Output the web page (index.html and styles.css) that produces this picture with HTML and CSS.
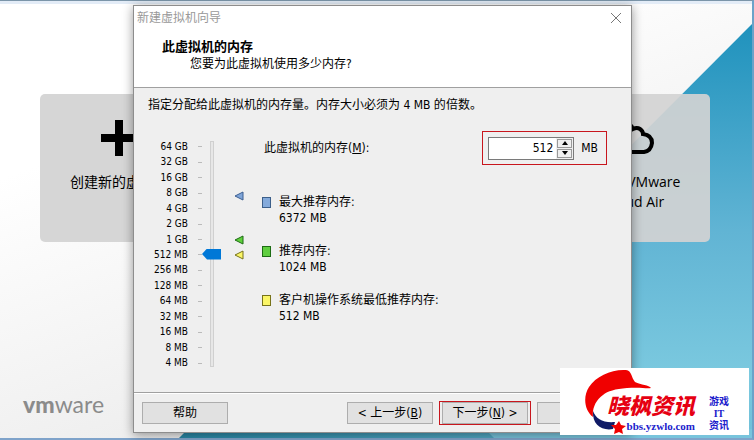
FILE: index.html
```
<!DOCTYPE html>
<html lang="zh-CN">
<head>
  <meta charset="UTF-8">
  <meta name="viewport" content="width=device-width, initial-scale=1.0">
  <title>新建虚拟机向导</title>
  <link rel="stylesheet" href="styles.css">
</head>
<body>
  <main class="home">
    <svg class="home-bg" viewBox="0 0 752 433" preserveAspectRatio="none" aria-hidden="true">
      <defs>
        <linearGradient id="sky" x1="0" y1="0" x2="0" y2="1">
          <stop offset="0" stop-color="#1f92bd"/>
          <stop offset="0.5" stop-color="#61b4d4"/>
          <stop offset="0.85" stop-color="#7bc9df"/>
          <stop offset="1" stop-color="#6fbfd8"/>
        </linearGradient>
        <linearGradient id="deep" x1="0" y1="0" x2="1" y2="0">
          <stop offset="0" stop-color="#2888a6"/>
          <stop offset="1" stop-color="#5fb2cc"/>
        </linearGradient>
      </defs>
      <path d="M752 20V433H339Z" fill="url(#sky)"/>
      <path d="M179 433L390 222L600 433Z" fill="url(#deep)"/>
      <path d="M485 424L494 433H752V424Z" fill="#78c4dc"/>
    </svg>
    <div class="home-panel">
      <button class="home-btn" type="button">
        <svg width="36" height="36" viewBox="0 0 36 36" aria-hidden="true"><path d="M14 0h8v14h14v8H22v14h-8V22H0v-8h14z"/></svg>
        <span>创建新的虚拟机</span>
      </button>
      <button class="home-btn" type="button">
        <svg width="36" height="36" viewBox="0 0 36 36" aria-hidden="true"><path d="M4 4h28v28H4z" fill="none" stroke="#000" stroke-width="4"/></svg>
        <span>打开虚拟机</span>
      </button>
      <button class="home-btn" type="button">
        <svg width="48" height="36" viewBox="0 0 48 36" aria-hidden="true"><path d="M10 32Q2 31 2 24Q2 17 9 16Q10 4 20 4Q24 4 26 9Q30 7 33 9Q36 11 36 14Q45 15 45 23Q44 31 37 32Z" fill="none" stroke="#000" stroke-width="4"/></svg>
        <span>连接到 VMware<br>vCloud Air</span>
      </button>
    </div>
    <div class="vmware"><b>vm</b>ware</div>
  </main>

  <form class="dialog">
    <div class="title-bar">
      <span>新建虚拟机向导</span>
      <button class="close" type="button" aria-label="关闭">
        <svg width="12" height="12" viewBox="0 0 12 12"><path d="M1 1l10 10M11 1L1 11" stroke="#777"/></svg>
      </button>
    </div>
    <header class="dialog-head">
      <h1>此虚拟机的内存</h1>
      <p>您要为此虚拟机使用多少内存?</p>
    </header>

    <section class="dialog-body">
      <p>指定分配给此虚拟机的内存量。内存大小必须为 4 MB 的倍数。</p>
      <div class="memory">
        <ul class="scale">
          <li>64 GB</li>
          <li>32 GB</li>
          <li>16 GB</li>
          <li>8 GB</li>
          <li>4 GB</li>
          <li>2 GB</li>
          <li>1 GB</li>
          <li>512 MB</li>
          <li>256 MB</li>
          <li>128 MB</li>
          <li>64 MB</li>
          <li>32 MB</li>
          <li>16 MB</li>
          <li>8 MB</li>
          <li>4 MB</li>
        </ul>
        <input class="slider" type="range" min="0" max="14" value="7" aria-label="内存">
        <div class="marks">
          <svg class="mark-max" width="10" height="10" viewBox="0 0 10 10"><path d="M1 5l8-4v8z" fill="#7fa5d8" stroke="#3c5f92"/></svg>
          <svg class="mark-rec" width="10" height="10" viewBox="0 0 10 10"><path d="M1 5l8-4v8z" fill="#5fd03c" stroke="#1d6b14"/></svg>
          <svg class="mark-min" width="10" height="10" viewBox="0 0 10 10"><path d="M1 5l8-4v8z" fill="#fbf667" stroke="#77731b"/></svg>
        </div>
        <div class="details">
          <div class="field">
            <label for="mem">此虚拟机的内存(<u>M</u>):</label>
            <div class="field-box">
              <div class="spinner">
                <input id="mem" type="text" value="512">
                <div class="spin-btns">
                  <button type="button" aria-label="增加"><svg width="6" height="4" viewBox="0 0 6 4"><path d="M0 4l3-4 3 4z"/></svg></button>
                  <button type="button" aria-label="减少"><svg width="6" height="4" viewBox="0 0 6 4"><path d="M0 0l3 4 3-4z"/></svg></button>
                </div>
              </div>
              <span>MB</span>
            </div>
          </div>
          <dl class="legend">
            <div class="max"><dt>最大推荐内存:</dt><dd>6372 MB</dd></div>
            <div class="rec"><dt>推荐内存:</dt><dd>1024 MB</dd></div>
            <div class="min"><dt>客户机操作系统最低推荐内存:</dt><dd>512 MB</dd></div>
          </dl>
        </div>
      </div>
    </section>

    <footer class="dialog-foot">
      <button class="btn help" type="button">帮助</button>
      <button class="btn" type="button">&lt; 上一步(<u>B</u>)</button>
      <span class="highlight"><button class="btn" type="button">下一步(<u>N</u>) &gt;</button></span>
      <button class="btn" type="button"></button>
    </footer>
  </form>

  <aside class="site-mark">
    <svg class="site-logo" width="76" height="66" viewBox="0 0 76 66" aria-hidden="true">
      <path d="M9 49C0 42-1 28 5 19C12 8 28 1 42 2C48 3 47 9 51 14C57 17 65 17 67 20C62 21 58 19 43 20C31 21 24 23 19 27C12 32 8 40 9 49Z" fill="#f00000"/>
      <path d="M9 43C12 51 19 55 31 54L29 61C18 63 8 57 9 43Z" fill="#101b66"/>
      <path d="M35 53l2 4 5 1-4 3 1 5-4-2-5 2 1-5-4-4 5 0z" fill="#f00000"/>
    </svg>
    <div class="site-name">
      <strong>晓枫资讯</strong>
      <span>bbs.yzwlo.com</span>
    </div>
    <div class="site-tags">游戏<br>IT<br>资讯</div>
  </aside>
</body>
</html>
```

FILE: styles.css
```
* {
  box-sizing: border-box;
}
body {
  margin: 0;
  min-height: 100vh;
  position: relative;
  display: flex;
  overflow: hidden;
  font: 12px/16px "DejaVu Sans Condensed", "Noto Sans CJK SC", sans-serif;
  color: #000;
  background: #dfe9f4;
}
h1, p, ul, dl, dd {
  margin: 0;
  padding: 0;
}
button, input {
  font: inherit;
  color: inherit;
}

/* home screen behind the wizard */
.home {
  flex: 1;
  position: relative;
  display: flex;
  flex-direction: column;
  justify-content: space-between;
  border-top: 1px solid #7b95a9;
  border-right: 2px solid #6aa3c9;
  border-bottom: 2px solid #7fa3ca;
  padding: 93px 42px 20px 40px;
  background: linear-gradient(#e3ecf7 3px, transparent 3px), linear-gradient(160deg, #fff 25%, #ececec 75%);
}
.home-bg {
  position: absolute;
  left: 0;
  top: 3px;
  width: 100%;
  height: calc(100% - 3px);
}
.home-panel {
  position: relative;
  display: flex;
  justify-content: space-between;
  height: 148px;
  border-radius: 5px;
  background: rgba(210, 210, 210, 0.92);
}
.home-btn {
  display: flex;
  flex-direction: column;
  align-items: center;
  gap: 16px;
  width: 158px;
  padding: 26px 0 0;
  border: none;
  background: none;
  font: 14px/20px "Open Sans", "Noto Sans CJK SC", sans-serif;
}
.vmware {
  position: relative;
  margin-left: -17px;
  font: 23px/28px Lato, sans-serif;
  color: #8b8b8b;
}
.vmware b {
  font-weight: 900;
}

/* wizard window */
.dialog {
  position: absolute;
  top: 5px;
  left: 133px;
  right: 122px;
  border: 1px solid #8d8d8d;
  background: #efefef;
  box-shadow: 0 2px 10px rgba(0, 0, 0, 0.4);
}
.title-bar {
  display: flex;
  justify-content: space-between;
  align-items: center;
  height: 24px;
  padding: 0 9px 0 3px;
  background: #fff;
  color: #999;
}
.close {
  display: flex;
  padding: 0;
  border: none;
  background: none;
}
.dialog-head {
  height: 58px;
  padding: 8px 28px;
  background: #fff;
  border-bottom: 1px solid #a0a0a0;
}
.dialog-head h1 {
  font-size: 13px;
  line-height: 18px;
}
.dialog-head p {
  padding-left: 28px;
}
.dialog-body {
  padding: 9px 14px 21px;
}
.memory {
  display: flex;
  margin-top: 26px;
}
.scale {
  display: grid;
  grid-template-rows: repeat(15, 1fr);
  align-items: center;
  width: 54px;
  height: 232px;
  list-style: none;
  font-size: 10px;
  line-height: 14px;
}
.scale li {
  display: flex;
  justify-content: flex-end;
  align-items: center;
  gap: 10px;
}
.scale li::after {
  content: "";
  width: 4px;
  height: 1px;
  background: #bbb;
}
.slider {
  appearance: none;
  writing-mode: vertical-lr;
  direction: rtl;
  width: 20px;
  height: 226px;
  margin: 2px 0;
  background: linear-gradient(#e7e7e7, #e7e7e7) 8px 0 / 4px 100% no-repeat;
}
.slider::-webkit-slider-runnable-track {
  width: 4px;
  border: 1px solid #d0d0d0;
  background: #e7e7e7;
}
.slider::-webkit-slider-thumb {
  appearance: none;
  width: 19px;
  height: 11px;
  margin-left: -9px;
  background: #0078d7;
  clip-path: polygon(0 50%, 5px 0, 100% 0, 100% 100%, 5px 100%);
}
.marks {
  display: grid;
  grid-template-rows: repeat(15, 1fr);
  align-items: center;
  width: 10px;
  height: 232px;
  margin-left: 12px;
}
.mark-max {
  grid-row: 4;
  align-self: end;
}
.mark-rec {
  grid-row: 7;
}
.mark-min {
  grid-row: 8;
}
.details {
  flex: 1;
  padding-left: 18px;
}
.field {
  display: flex;
  align-items: center;
  justify-content: space-between;
  margin: -8px 10px 0 2px;
}
.field-box {
  display: flex;
  align-items: center;
  gap: 7px;
  height: 34px;
  padding: 0 8px 0 5px;
  border: 1px solid #c8161d;
}
.spinner {
  display: flex;
  width: 86px;
  height: 23px;
  border: 1px solid #7a7a7a;
  background: #fff;
}
.spinner input {
  flex: 1;
  min-width: 0;
  padding: 0 3px;
  border: none;
  background: none;
  text-align: right;
}
.spin-btns {
  display: grid;
  gap: 1px;
  width: 17px;
  padding: 1px;
  background: #efefef;
}
.spin-btns button {
  display: flex;
  align-items: center;
  justify-content: center;
  padding: 0;
  border: 1px solid #999;
  background: #efefef;
}
.legend {
  display: grid;
  gap: 17px;
  margin-top: 29px;
}
.legend div {
  display: grid;
  grid-template-columns: 9px 1fr;
  column-gap: 8px;
  align-items: center;
}
.legend div::before {
  content: "";
  height: 9px;
  border: 1px solid;
}
.legend dd {
  grid-column: 2;
}
.legend .max::before {
  border-color: #3c5f8a;
  background: #84aadb;
}
.legend .rec::before {
  border-color: #1d6b14;
  background: #5fce3f;
}
.legend .min::before {
  border-color: #77731b;
  background: #fbf667;
}
.dialog-foot {
  display: flex;
  align-items: center;
  gap: 6px;
  height: 40px;
  padding: 0 8px;
  border-top: 1px solid #a0a0a0;
  box-shadow: inset 0 1px #fff;
}
.btn {
  width: 86px;
  height: 22px;
  padding: 0;
  border: 1px solid #adadad;
  background: #e1e1e1;
  white-space: nowrap;
}
.help {
  margin-right: auto;
}
.highlight {
  display: flex;
  padding: 0 2px;
  border: 1px solid #c8161d;
}

/* forum stamp in the corner */
.site-mark {
  position: absolute;
  right: 5px;
  bottom: 5px;
  display: flex;
  width: 189px;
  height: 67px;
  background: #fff;
  font-family: "Liberation Serif", "Noto Sans CJK SC", serif;
  font-weight: bold;
  color: #2020cc;
}
.site-logo {
  position: absolute;
  left: 24px;
  top: 0;
}
.site-name {
  position: relative;
  width: 92px;
  margin: 27px 0 0 43px;
  text-align: right;
  line-height: 14px;
}
.site-name strong {
  display: block;
  font-size: 22px;
  line-height: 24px;
  font-style: italic;
  font-weight: 900;
  color: #e60012;
}
.site-name span {
  font-size: 11px;
}
.site-tags {
  margin: 28px 0 0 14px;
  font-size: 10px;
  line-height: 12px;
  text-align: center;
}
```
